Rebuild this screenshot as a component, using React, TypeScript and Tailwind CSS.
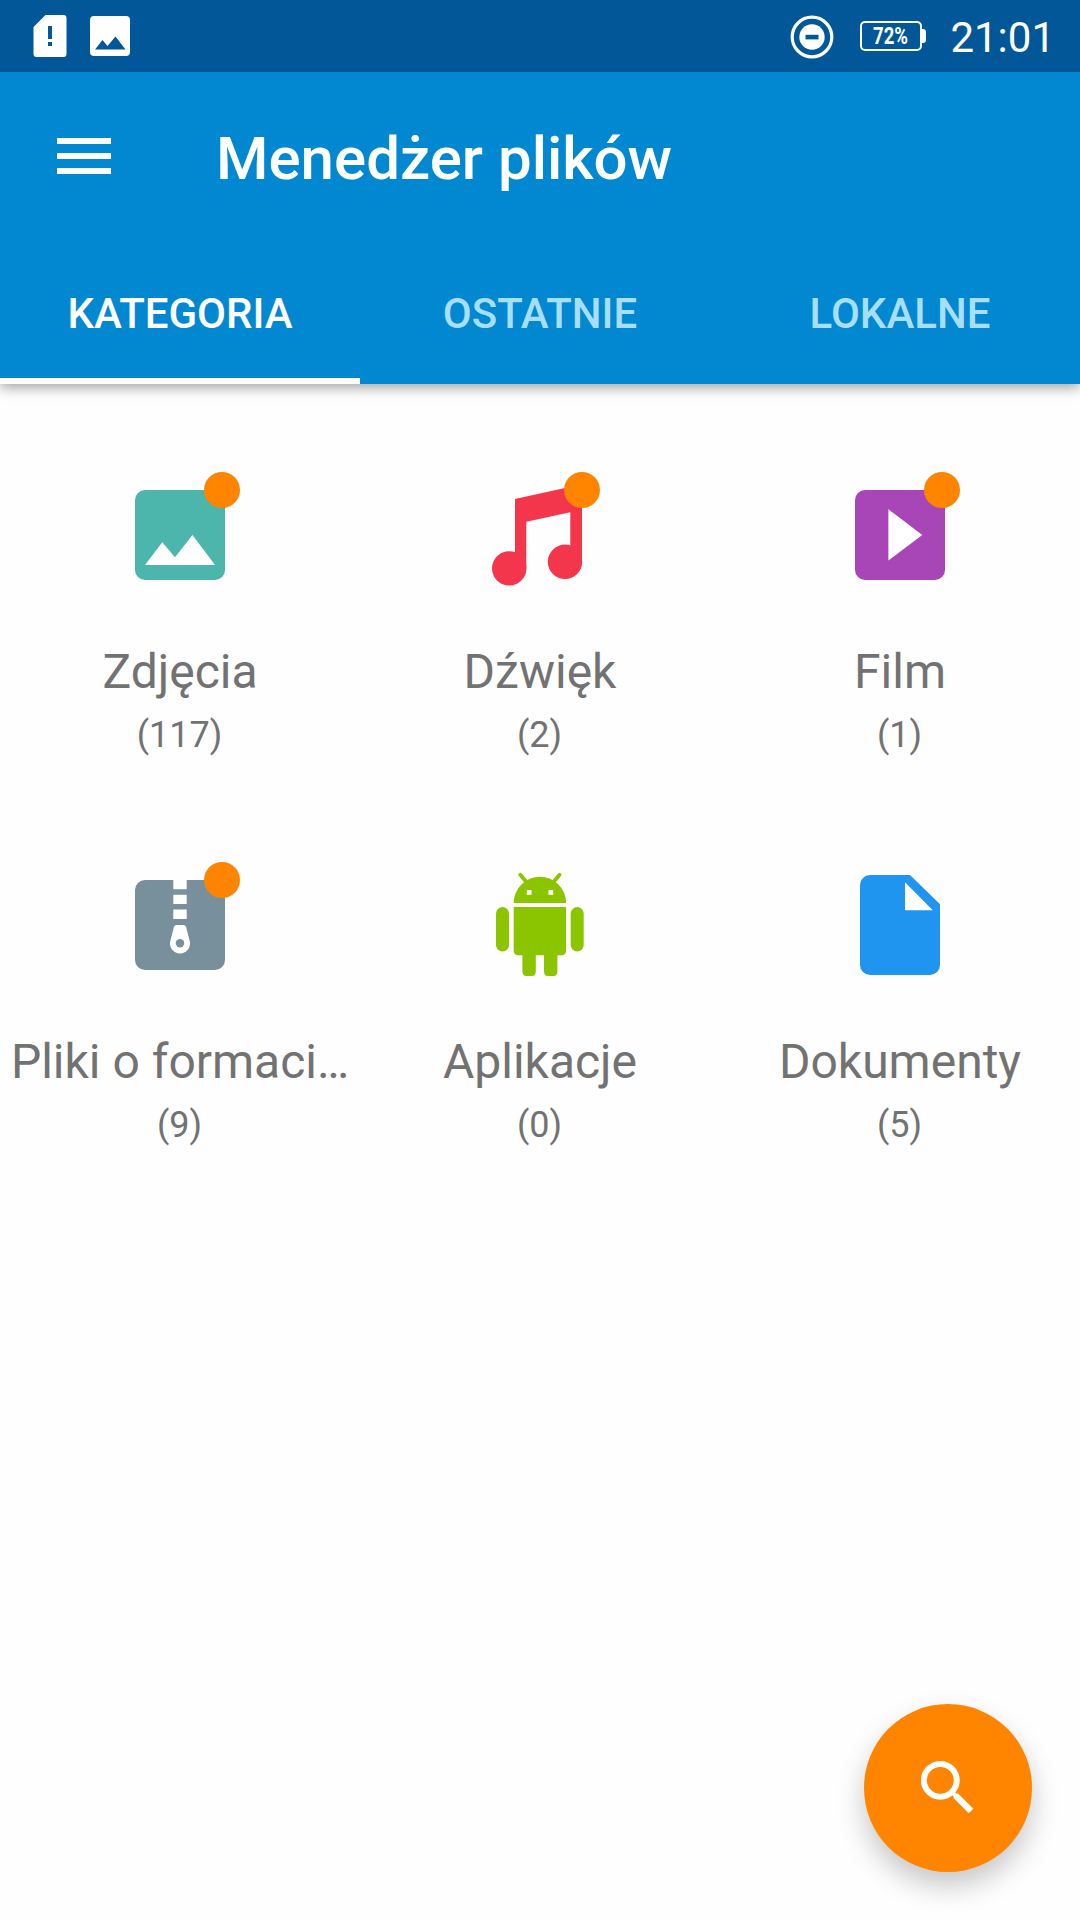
import type { ReactNode } from "react";

interface Category {
    name: string;
    count: number;
    hasNew: boolean;
    icon: ReactNode;
}

const tabs = ["KATEGORIA", "OSTATNIE", "LOKALNE"];

const categories: Category[] = [
    {
        name: "Zdjęcia",
        count: 117,
        hasNew: true,
        icon: (
            <>
                <rect x="25" y="40" width="90" height="90" rx="10" fill="#4db6ac" />
                <path d="M35 115 52.3 92.3 65 107.3 82.5 85 105 115z" fill="#fff" />
            </>
        ),
    },
    {
        name: "Dźwięk",
        count: 2,
        hasNew: true,
        icon: (
            <g fill="#f3364b">
                <path d="M45 49 112 34.3V112H100.3V62.3L56.3 71.7V118.4H45z" />
                <circle cx="39.2" cy="118.4" r="17.2" />
                <circle cx="95" cy="111.8" r="17.2" />
            </g>
        ),
    },
    {
        name: "Film",
        count: 1,
        hasNew: true,
        icon: (
            <>
                <rect x="25" y="40" width="90" height="90" rx="10" fill="#a846b8" />
                <path d="M58.4 59.3 92.3 85 58.4 110.5z" fill="#fff" />
            </>
        ),
    },
    {
        name: "Pliki o formaci…",
        count: 9,
        hasNew: true,
        icon: (
            <>
                <rect x="25" y="40" width="90" height="90" rx="10" fill="#78909c" />
                <path d="M63.3 39.5h13.4v9.8H63.3zM63.3 54.7h13.4V64H63.3zM63.3 69.5h13.4V79H63.3z" fill="#fff" />
                <path d="M66.5 85h7q2 0 2.6 2l3.7 14.5a10 10 0 1 1-19.6 0L63.9 87q.6-2 2.6-2z" fill="#fff" />
                <circle cx="70" cy="103.3" r="4.2" fill="#78909c" />
            </>
        ),
    },
    {
        name: "Aplikacje",
        count: 0,
        hasNew: false,
        icon: (
            <>
                <g fill="#8bc500">
                    <path d="M43.7 63a26.2 26.2 0 0 1 52.4 0z" />
                    <path d="M50.3 34.7 56.3 42M89.5 34.7 83.5 42" stroke="#8bc500" strokeWidth="3.8" strokeLinecap="round" />
                    <path d="M43.7 67h52.4v44a4.3 4.3 0 0 1-4.3 4.3H48a4.3 4.3 0 0 1-4.3-4.3z" />
                    <rect x="26" y="67" width="13" height="44.4" rx="6.5" />
                    <rect x="100.7" y="67" width="13" height="44.4" rx="6.5" />
                    <path d="M52.4 114h13.4v17q0 5-4 5h-5.4q-4 0-4-5zM74 114h13.4v17q0 5-4 5H78q-4 0-4-5z" />
                </g>
                <path d="M56.8 50h4.8v4.7h-4.8zM78.4 50h4.8v4.7h-4.8z" fill="#fff" />
            </>
        ),
    },
    {
        name: "Dokumenty",
        count: 5,
        hasNew: false,
        icon: (
            <>
                <path d="M40 35H80L110 64.3V125a10 10 0 0 1-10 10H40a10 10 0 0 1-10-10V45a10 10 0 0 1 10-10z" fill="#2095f0" />
                <path d="M75 42.3V70.3h27.8z" fill="#fff" />
            </>
        ),
    },
];

function StatusBar() {
    return (
        <div className="relative z-10 flex h-[72px] items-center bg-[#015798] text-white">
            <svg className="ml-[33px] h-[42px] w-[34px]" viewBox="0 0 34 42">
                <path d="M12.5 0H30.5a3 3 0 0 1 3 3V39a3 3 0 0 1-3 3H3.5a3 3 0 0 1-3-3V12z" fill="#fff" />
                <path d="M15 11h4v13h-4zM15 27h4v4h-4z" fill="#015798" />
            </svg>
            <svg className="ml-[23px] h-10 w-10" viewBox="0 0 40 40">
                <rect width="40" height="40" rx="4" fill="#fff" />
                <path d="M5 33.5 12.5 24 17.5 30 25.5 20.5 35.5 33.5z" fill="#015798" />
            </svg>
            <div className="ml-auto flex items-center">
                <svg className="mt-px h-11 w-11" viewBox="0 0 44 44">
                    <circle cx="22" cy="22" r="19.8" fill="none" stroke="#fff" strokeWidth="3.2" />
                    <circle cx="22" cy="22" r="12.7" fill="#fff" />
                    <path d="M15.5 19.8h13v4.6h-13z" fill="#015798" />
                </svg>
                <svg className="ml-[25px] h-[30px] w-[67px]" viewBox="0 0 67 30">
                    <rect x="2" y="1" width="60" height="28" rx="4" fill="none" stroke="#fff" strokeWidth="2" />
                    <path d="M62 8h2q3 0 3 3v8q0 3-3 3h-2z" fill="#fff" />
                    <text x="14" y="23" textLength="35" lengthAdjust="spacingAndGlyphs" className="text-[23px] font-bold" fill="#fff">72%</text>
                </svg>
                <span className="mt-[3px] mr-[25px] ml-[24px] text-[42px] leading-none">21:01</span>
            </div>
        </div>
    );
}

function CategoryItem({ category }: { category: Category }) {
    return (
        <div className="flex h-[390px] flex-col items-center text-[#727272]">
            <svg className="h-[140px] w-[140px] shrink-0" viewBox="0 0 140 140">
                {category.icon}
                {category.hasNew && <circle cx="112" cy="40" r="18" fill="#ff8400" />}
            </svg>
            <p className="mt-[54px] text-[48px] leading-[56px] whitespace-nowrap">{category.name}</p>
            <p className="mt-[14px] mr-px text-[36px] leading-[42px]">({category.count})</p>
        </div>
    );
}

function App() {
    return (
        <div className="relative h-[1920px] w-[1080px] overflow-hidden bg-[#fefefe] font-[Roboto,sans-serif]">
            <StatusBar />
            <header className="bg-[#0288d1] text-white shadow-[0_4px_12px_rgba(0,0,0,0.35)]">
                <div className="flex h-[168px] items-center">
                    <button className="ml-[57px] flex w-[54px] flex-col gap-[9px]">
                        <span className="h-[6px] w-full bg-white" />
                        <span className="h-[6px] w-full bg-white" />
                        <span className="h-[6px] w-full bg-white" />
                    </button>
                    <h1 className="mt-[6px] ml-[105px] text-[60px] leading-[70px] font-medium">Menedżer plików</h1>
                </div>
                <nav className="grid h-[144px] grid-cols-3">
                    {tabs.map((tab, i) => (
                        <button
                            key={tab}
                            className={
                                i === 0
                                    ? "border-b-[6px] border-white pt-[8px] text-[42px] font-medium"
                                    : "border-b-[6px] border-transparent pt-[8px] text-[42px] font-medium text-[#a7dffb]"
                            }
                        >
                            {tab}
                        </button>
                    ))}
                </nav>
            </header>
            <main className="grid grid-cols-3 pt-[66px]">
                {categories.map((category) => (
                    <CategoryItem key={category.name} category={category} />
                ))}
            </main>
            <button className="absolute right-12 bottom-12 h-[168px] w-[168px] rounded-full bg-[#ff8400] shadow-[0_14px_28px_rgba(0,0,0,0.22)]">
                <svg className="h-[168px] w-[168px]" viewBox="0 0 168 168" fill="none" stroke="#fff" strokeWidth="6">
                    <circle cx="76.3" cy="76.3" r="16.4" />
                    <path d="M88 88 92 92" strokeWidth="4" />
                    <path d="M91.5 91.5 107 107" strokeWidth="6.5" />
                </svg>
            </button>
        </div>
    );
}

export default App;
